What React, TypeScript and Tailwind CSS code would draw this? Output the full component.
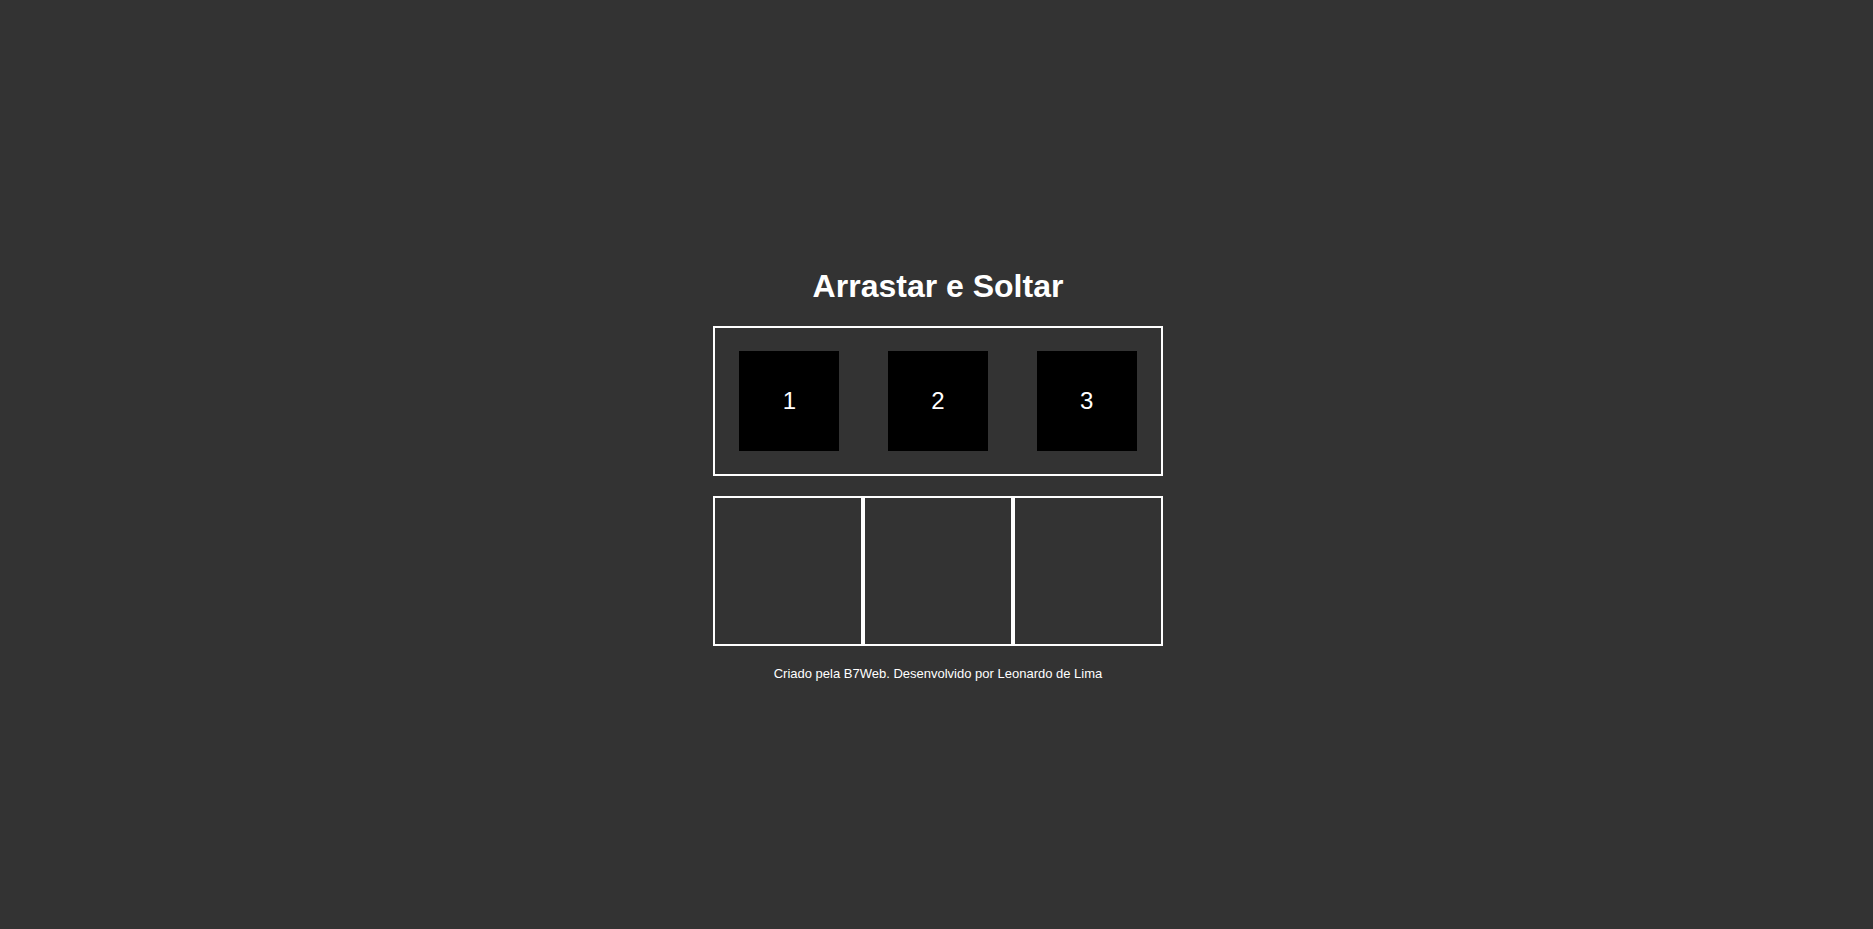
const pieces = ["1", "2", "3"];
const slots = [0, 1, 2];

export default function App() {
  return (
    <div className="min-h-screen bg-[#333333] text-white flex flex-col items-center justify-center pl-[3px] font-['Liberation_Sans',Arial,sans-serif]">
      {/* TITLE */}
      <h1 className="text-[32px] leading-[37px] font-bold my-[21px]">
        Arrastar e Soltar
      </h1>

      {/* NEUTRAL AREA */}
      <div className="w-[450px] h-[150px] border-2 border-white flex items-center justify-around">
        {pieces.map((p) => (
          <div
            key={p}
            className="w-[100px] h-[100px] bg-black flex items-center justify-center text-[24px]"
          >
            {p}
          </div>
        ))}
      </div>

      {/* DROP AREAS */}
      <div className="flex mt-5">
        {slots.map((s) => (
          <div key={s} className="w-[150px] h-[150px] border-2 border-white" />
        ))}
      </div>

      {/* FOOTER */}
      <p className="mt-5 mb-[2px] text-[13px] leading-[15px]">
        Criado pela B7Web. Desenvolvido por Leonardo de Lima
      </p>
    </div>
  );
}
